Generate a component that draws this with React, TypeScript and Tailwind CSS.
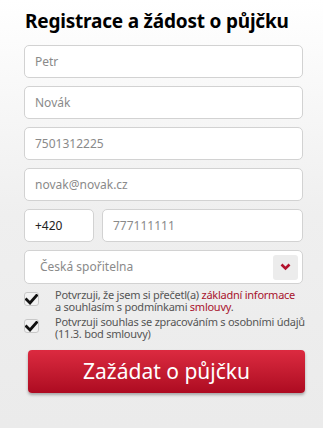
import React from "react";

const font = { fontFamily: '"Noto Sans", "Open Sans", sans-serif' };

function Field({ value, className = "", dark = false }: { value: string; className?: string; dark?: boolean }) {
  return (
    <div
      className={`h-[33px] bg-white border border-[#d2d2d2] rounded-[5px] flex items-center pl-[10px] text-[12px] ${dark ? "text-[#222]" : "text-[#8a8a8a]"} ${className}`}
    >
      {value}
    </div>
  );
}

function Check() {
  return (
    <div className="w-[15px] h-[14px] mt-[3px] shrink-0 rounded-[3px] border border-[#c8c8c8] bg-[#f2f2f2] flex items-center justify-center">
      <svg width="13" height="11" viewBox="0 0 13 11">
        <path d="M1.5 5.5 L5 9 L11.5 1.5" stroke="#111" strokeWidth="2.8" fill="none" strokeLinecap="square" />
      </svg>
    </div>
  );
}

export default function App() {
  return (
    <div
      className="w-[323px] h-[428px] bg-gradient-to-b from-white via-[#efefef] to-[#ebebeb] px-[24px] pt-[8px] overflow-hidden"
      style={font}
    >
      <h1 className="text-[19px] font-bold text-black leading-[26px] pl-[1px] tracking-[-0.2px]">
        Registrace a žádost o půjčku
      </h1>
      <div className="mt-[11px] flex flex-col gap-[8px] w-[279px]">
        <Field value="Petr" />
        <Field value="Novák" />
        <Field value="7501312225" />
        <Field value="novak@novak.cz" />
        <div className="flex gap-[8px]">
          <Field value="+420" dark className="w-[70px]" />
          <Field value="777111111" className="flex-1" />
        </div>
        <div className="h-[34px] bg-white border border-[#d2d2d2] rounded-[5px] flex items-center pl-[15px] pr-[4px] text-[12px] text-[#8a8a8a]">
          <span className="flex-1">Česká spořitelna</span>
          <div className="w-[25px] h-[25px] bg-[#ececec] rounded-[3px] flex items-center justify-center">
            <svg width="11" height="8" viewBox="0 0 11 8">
              <path d="M1.5 1.5 L5.5 5.5 L9.5 1.5" stroke="#b3122d" strokeWidth="2.6" fill="none" />
            </svg>
          </div>
        </div>
      </div>
      <div className="mt-[5px] flex flex-col gap-[3px] text-[11px] leading-[12px] text-[#555] whitespace-nowrap tracking-[-0.25px]">
        <div className="flex gap-[16px]">
          <Check />
          <div>
            Potvrzuji, že jsem si přečetl(a) <span className="text-[#a8132c]">základní informace</span>
            <br />a souhlasím s podmínkami <span className="text-[#a8132c]">smlouvy</span>.
          </div>
        </div>
        <div className="flex gap-[16px]">
          <Check />
          <div>
            Potvrzuji souhlas se zpracováním s osobními údajů
            <br />
            (11.3. bod smlouvy)
          </div>
        </div>
      </div>
      <button
        className="mt-[10px] ml-[4px] w-[277px] h-[43px] rounded-[4px] bg-gradient-to-b from-[#dc2a40] to-[#ad0a21] text-white text-[21px] shadow-[0_2px_3px_rgba(0,0,0,0.3)] flex items-center justify-center"
        style={font}
      >
        Zažádat o půjčku
      </button>
    </div>
  );
}
